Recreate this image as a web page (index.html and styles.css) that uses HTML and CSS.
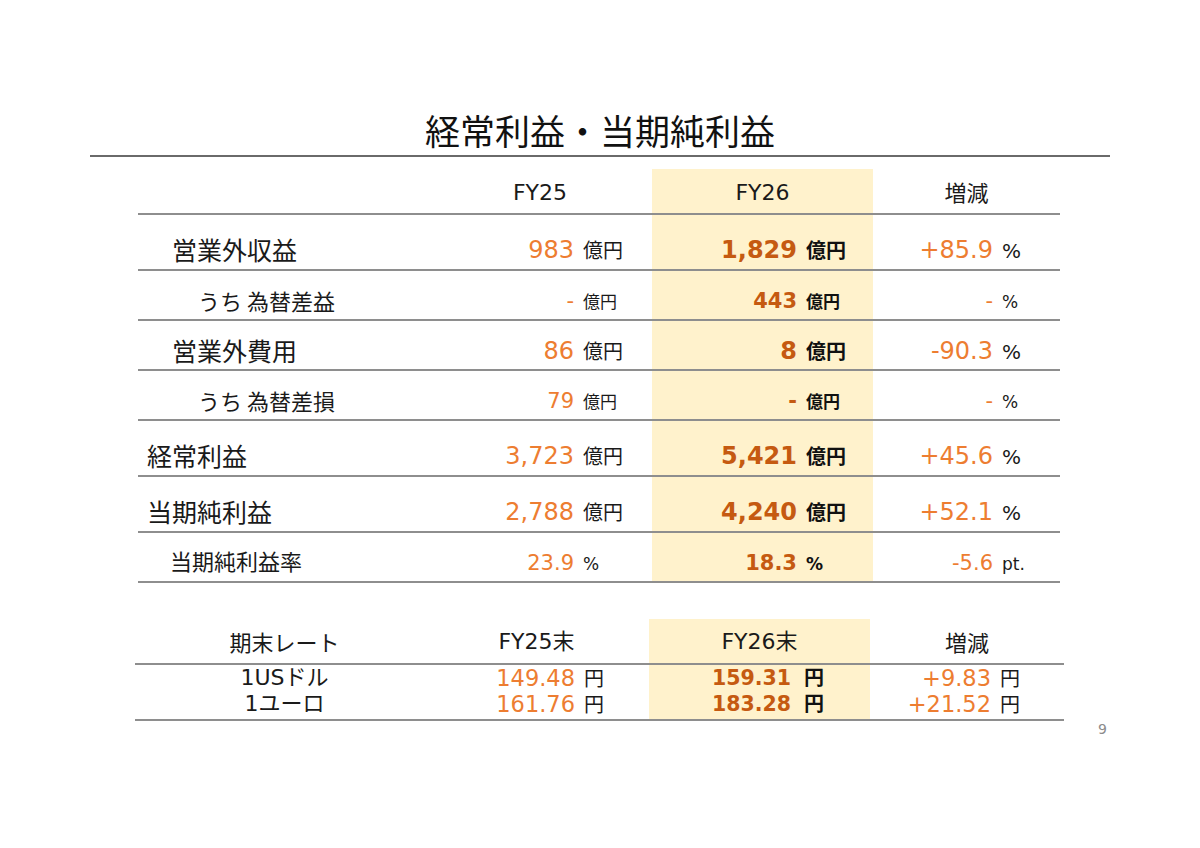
FILE: index.html
```html
<!DOCTYPE html>
<html lang="ja">
<head>
<meta charset="utf-8">
<title>経常利益・当期純利益</title>
<link rel="stylesheet" href="styles.css">
</head>
<body>
<div class="slide">
  <h1 class="title">経常利益・当期純利益</h1>
  <div class="rule"></div>

  <div class="pl">
    <div class="row head">
      <div class="cell"></div>
      <div class="cell ctr">FY25</div>
      <div class="cell ctr hl">FY26</div>
      <div class="cell ctr jp">増減</div>
    </div>

    <div class="row big">
      <div class="cell lbl in1">営業外収益</div>
      <div class="cell v c25"><span class="num">983</span><span class="unit">億円</span></div>
      <div class="cell v c26 hl"><span class="num">1,829</span><span class="unit">億円</span></div>
      <div class="cell v cdf"><span class="num">+85.9</span><span class="unit">%</span></div>
    </div>

    <div class="row sub">
      <div class="cell lbl in2">うち 為替差益</div>
      <div class="cell v c25"><span class="num">-</span><span class="unit">億円</span></div>
      <div class="cell v c26 hl"><span class="num">443</span><span class="unit">億円</span></div>
      <div class="cell v cdf"><span class="num">-</span><span class="unit">%</span></div>
    </div>

    <div class="row mid">
      <div class="cell lbl in1">営業外費用</div>
      <div class="cell v c25"><span class="num">86</span><span class="unit">億円</span></div>
      <div class="cell v c26 hl"><span class="num">8</span><span class="unit">億円</span></div>
      <div class="cell v cdf"><span class="num">-90.3</span><span class="unit">%</span></div>
    </div>

    <div class="row sub">
      <div class="cell lbl in2">うち 為替差損</div>
      <div class="cell v c25"><span class="num">79</span><span class="unit">億円</span></div>
      <div class="cell v c26 hl"><span class="num">-</span><span class="unit">億円</span></div>
      <div class="cell v cdf"><span class="num">-</span><span class="unit">%</span></div>
    </div>

    <div class="row big">
      <div class="cell lbl in0">経常利益</div>
      <div class="cell v c25"><span class="num">3,723</span><span class="unit">億円</span></div>
      <div class="cell v c26 hl"><span class="num">5,421</span><span class="unit">億円</span></div>
      <div class="cell v cdf"><span class="num">+45.6</span><span class="unit">%</span></div>
    </div>

    <div class="row big">
      <div class="cell lbl in0">当期純利益</div>
      <div class="cell v c25"><span class="num">2,788</span><span class="unit">億円</span></div>
      <div class="cell v c26 hl"><span class="num">4,240</span><span class="unit">億円</span></div>
      <div class="cell v cdf"><span class="num">+52.1</span><span class="unit">%</span></div>
    </div>

    <div class="row sub rate">
      <div class="cell lbl in3">当期純利益率</div>
      <div class="cell v c25"><span class="num">23.9</span><span class="unit">%</span></div>
      <div class="cell v c26 hl"><span class="num">18.3</span><span class="unit">%</span></div>
      <div class="cell v cdf"><span class="num">-5.6</span><span class="unit">pt.</span></div>
    </div>
  </div>

  <div class="fx">
    <div class="row fhead">
      <div class="cell ctr lblc jp">期末レート</div>
      <div class="cell ctr">FY25末</div>
      <div class="cell ctr hl">FY26末</div>
      <div class="cell ctr jp">増減</div>
    </div>
    <div class="row frow">
      <div class="cell ctr lblc">1USドル</div>
      <div class="cell v f25"><span class="num">149.48</span><span class="unit">円</span></div>
      <div class="cell v f26 hl"><span class="num">159.31</span><span class="unit">円</span></div>
      <div class="cell v fdf"><span class="num">+9.83</span><span class="unit">円</span></div>
    </div>
    <div class="row frow last">
      <div class="cell ctr lblc">1ユーロ</div>
      <div class="cell v f25"><span class="num">161.76</span><span class="unit">円</span></div>
      <div class="cell v f26 hl"><span class="num">183.28</span><span class="unit">円</span></div>
      <div class="cell v fdf"><span class="num">+21.52</span><span class="unit">円</span></div>
    </div>
  </div>

  <div class="pnum">9</div>
</div>
</body>
</html>
```

FILE: styles.css
```css
* { box-sizing: border-box; }

html, body {
  margin: 0;
  padding: 0;
  background: #ffffff;
}

body {
  font-family: "DejaVu Sans", "Noto Sans CJK JP", sans-serif;
  color: #1a1a1a;
}

.slide {
  width: 1200px;
  height: 848px;
  overflow: hidden;
}

.title {
  margin: 0;
  padding-top: 110px;
  height: 150px;
  line-height: 40px;
  font-size: 35px;
  font-weight: normal;
  text-align: center;
  font-family: "Noto Sans CJK JP", sans-serif;
  color: #111;
}

.rule {
  margin: 5px 90px 0;
  height: 2px;
  background: #6a6a6a;
}

/* ---------- main P/L table ---------- */
.pl {
  margin: 12px 0 0 138px;
  width: 922px;
}

.pl .row {
  display: grid;
  grid-template-columns: 290px 224px 221px 187px;
  border-bottom: 2px solid #8e8e8e;
}

.row.head { height: 46px; }
.row.big { height: 56px; }
.row.mid { height: 50px; }
.row.sub { height: 50px; }

.cell {
  display: grid;
  align-content: end;
  line-height: 30px;
  padding-bottom: 5px;
}

.pl .sub .cell { padding-bottom: 4px; }
.pl .mid .cell { padding-bottom: 4px; }

.pl .big .v { padding-bottom: 3px; }
.pl .mid .v { padding-bottom: 2px; }
.pl .sub .v { padding-bottom: 2px; }

.ctr {
  justify-items: center;
  font-size: 22px;
}

.jp { font-family: "Noto Sans CJK JP", sans-serif; }

.pl .head .jp { padding-bottom: 7px; }

.hl { background: #fff2cc; }

.lbl {
  font-family: "Noto Sans CJK JP", sans-serif;
  font-size: 25px;
  color: #1a1a1a;
}

.sub .lbl { font-size: 22px; }
.pl .rate .lbl { padding-bottom: 6px; }

.in0 { padding-left: 9px; }
.in1 { padding-left: 34px; }
.in2 { padding-left: 60px; }
.in3 { padding-left: 32px; }

.v {
  align-items: baseline;
}

.num {
  text-align: right;
  color: #ed7d31;
  font-size: 24px;
}

.unit {
  padding-left: 9px;
  font-size: 20px;
  color: #1a1a1a;
  font-family: "DejaVu Sans", "Noto Sans CJK JP", sans-serif;
}

.sub .num { font-size: 21px; }
.sub .unit { font-size: 17px; }

.c25 { grid-template-columns: 1fr 78px; }
.c26 { grid-template-columns: 1fr 76px; }
.cdf { grid-template-columns: 1fr 67px; }

.c26 .num,
.f26 .num {
  color: #c55a11;
  font-weight: bold;
}

.c26 .unit,
.f26 .unit {
  font-weight: bold;
  color: #111;
}

/* ---------- FX rate table ---------- */
.fx {
  margin: 36px 0 0 135px;
  width: 929px;
}

.fx .row {
  display: grid;
  grid-template-columns: 289px 225px 221px 194px;
}

.fx .fhead {
  height: 46px;
  border-bottom: 2px solid #8e8e8e;
}

.fx .fhead .cell { padding-bottom: 6px; }
.fx .fhead .jp { padding-bottom: 7px; }

.fx .frow { height: 26px; }
.fx .frow .cell {
  line-height: 26px;
  padding-bottom: 0;
  align-content: start;
}

.fx .frow.last {
  height: 30px;
  border-bottom: 2px solid #8e8e8e;
}

.lblc {
  padding-left: 10px;
  font-size: 22px;
}

.fx .frow .num { font-size: 22.5px; }
.fx .frow .f26 .num { font-size: 20.5px; }
.fx .frow .unit { font-size: 20px; }

.f25 { grid-template-columns: 1fr 74px; }
.f26 { grid-template-columns: 1fr 79px; }
.f26 .unit { padding-left: 13px; }
.fdf { grid-template-columns: 1fr 73px; }

.pnum {
  padding-right: 93px;
  text-align: right;
  font-size: 14px;
  line-height: 16px;
  color: #8c8c8c;
}
```
